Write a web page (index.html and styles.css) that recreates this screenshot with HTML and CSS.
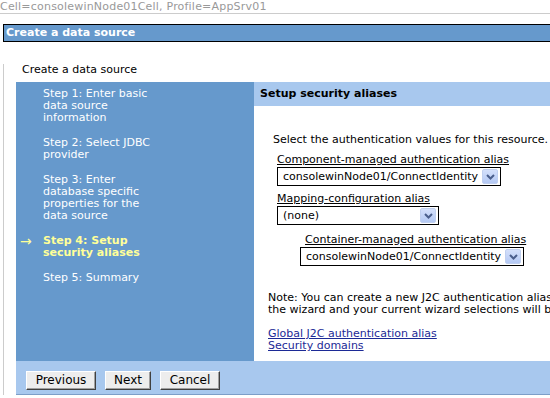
FILE: index.html
```html
<!DOCTYPE html>
<html lang="en">
<head>
  <meta charset="UTF-8" />
  <title>Create a data source</title>
  <link rel="stylesheet" href="styles.css">
</head>
<body>

  <div class="context">Cell=consolewinNode01Cell, Profile=AppSrv01</div>

  <div class="frame">
    <div class="frame-title">Create a data source</div>

    <div class="frame-body">
      <p class="wizard-title">Create a data source</p>

      <div class="wizard">
        <div class="wizard-main">
          <nav class="steps">
            <div class="step"><span class="marker"></span><span>Step 1: Enter basic<br>data source<br>information</span></div>
            <div class="step"><span class="marker"></span><span>Step 2: Select JDBC<br>provider</span></div>
            <div class="step"><span class="marker"></span><span>Step 3: Enter<br>database specific<br>properties for the<br>data source</span></div>
            <div class="step current"><span class="marker">&rarr;</span><span>Step 4: Setup<br>security aliases</span></div>
            <div class="step"><span class="marker"></span><span>Step 5: Summary</span></div>
          </nav>

          <section class="step-content">
            <h2>Setup security aliases</h2>
            <div class="content-body">
              <p class="intro">Select the authentication values for this resource.</p>

              <div class="field">
                <label>Component-managed authentication alias</label>
                <div class="select select-wide">
                  <span>consolewinNode01/ConnectIdentity</span>
                  <span class="select-btn"><svg width="9" height="6" viewBox="0 0 9 6"><path d="M1 1 L4.5 4.5 L8 1" fill="none" stroke="#4a5e8c" stroke-width="2"/></svg></span>
                </div>
              </div>

              <div class="field field-mapping">
                <label>Mapping-configuration alias</label>
                <div class="select select-narrow">
                  <span>(none)</span>
                  <span class="select-btn"><svg width="9" height="6" viewBox="0 0 9 6"><path d="M1 1 L4.5 4.5 L8 1" fill="none" stroke="#4a5e8c" stroke-width="2"/></svg></span>
                </div>
              </div>

              <div class="field field-container">
                <label>Container-managed authentication alias</label>
                <div class="select select-wide">
                  <span>consolewinNode01/ConnectIdentity</span>
                  <span class="select-btn"><svg width="9" height="6" viewBox="0 0 9 6"><path d="M1 1 L4.5 4.5 L8 1" fill="none" stroke="#4a5e8c" stroke-width="2"/></svg></span>
                </div>
              </div>

              <p class="note">Note: You can create a new J2C authentication alias from the links below. This action exits<br>the wizard and your current wizard selections will be lost.</p>

              <div class="links">
                <a href="#">Global J2C authentication alias</a><br>
                <a href="#">Security domains</a>
              </div>
            </div>
          </section>
        </div>

        <div class="wizard-buttons">
          <button class="btn btn-prev">Previous</button>
          <button class="btn btn-next">Next</button>
          <button class="btn btn-cancel">Cancel</button>
        </div>
      </div>
    </div>
  </div>

</body>
</html>
```

FILE: styles.css
```css
* {
  box-sizing: border-box;
}

html {
  overflow: hidden;
}

body {
  margin: 0;
  width: 720px;
  font-family: "DejaVu Sans", Verdana, sans-serif;
  font-size: 11px;
  color: #000;
  background: #fff;
}

.context {
  height: 14px;
  line-height: 13px;
  color: #999;
  letter-spacing: 0.2px;
  white-space: nowrap;
  border-bottom: 1px solid #ccc;
}

.frame {
  margin: 10px 0 0 3px;
}

.frame-title {
  height: 18px;
  line-height: 16px;
  padding-left: 2px;
  background: #6699cc;
  color: #fff;
  font-weight: bold;
  border: 1px solid #000;
  border-right: none;
}

.frame-body {
  border-left: 1px solid #ccc;
  padding: 0 0 0 12px;
}

.wizard-title {
  margin: 22px 0 6px 6px;
  line-height: 12px;
}

.wizard-main {
  display: flex;
}

.steps {
  width: 238px;
  flex: none;
  background: #6699cc;
  padding: 6px 0 0 4px;
}

.step {
  display: flex;
  color: #fff;
  line-height: 12px;
  margin-bottom: 13px;
  white-space: nowrap;
}

.marker {
  width: 23px;
  flex: none;
}

.step.current {
  color: #ffff99;
  font-weight: bold;
}

.step.current .marker {
  font-size: 14px;
  font-weight: normal;
}

.step-content {
  flex: 1;
}

.step-content h2 {
  margin: 0;
  height: 24px;
  line-height: 24px;
  padding-left: 6px;
  font-size: 11px;
  background: #a8c8ee;
}

.content-body {
  padding: 28px 0 9px 14px;
}

.intro {
  margin: 0 0 8px 5px;
  line-height: 12px;
}

.field {
  margin-left: 9px;
}

.field label {
  display: block;
  line-height: 12px;
  text-decoration: underline;
  margin-bottom: 1px;
}

.field-mapping {
  margin-top: 7px;
}

.field-container {
  margin-top: 9px;
  margin-left: 32px;
}

.field-container label {
  padding-left: 5px;
}

.select {
  display: flex;
  align-items: center;
  justify-content: space-between;
  height: 19px;
  border: 1px solid #000;
  padding: 0 2px 0 5px;
  background: #fff;
}

.select-wide {
  width: 224px;
}

.select-narrow {
  width: 162px;
}

.select-btn {
  display: flex;
  align-items: center;
  justify-content: center;
  width: 16px;
  height: 15px;
  border-radius: 2px;
  background: linear-gradient(#d4e0fb, #b4c9f4);
  border: 1px solid #c0d0f0;
}

.note {
  margin: 26px 0 12px 0;
  line-height: 12px;
  white-space: nowrap;
}

.links {
  line-height: 12px;
}

.links a {
  color: #1c2a96;
}

.wizard-buttons {
  height: 34px;
  padding: 10px 0 0 10px;
  background: #a8c8ee;
  border-bottom: 1px solid #7d9ec8;
  display: flex;
  gap: 9px;
  align-items: flex-start;
}

.btn {
  height: 19px;
  padding: 0 8px;
  font-family: "DejaVu Sans", Verdana, sans-serif;
  font-size: 12px;
  line-height: 15px;
  color: #000;
  background: #ededed;
  border: 1px solid;
  border-color: #fff #404040 #404040 #fff;
  box-shadow: inset -1px -1px #a0a0a0;
}

.btn-prev {
  width: 70px;
}

.btn-next {
  width: 46px;
}

.btn-cancel {
  width: 60px;
}
```
